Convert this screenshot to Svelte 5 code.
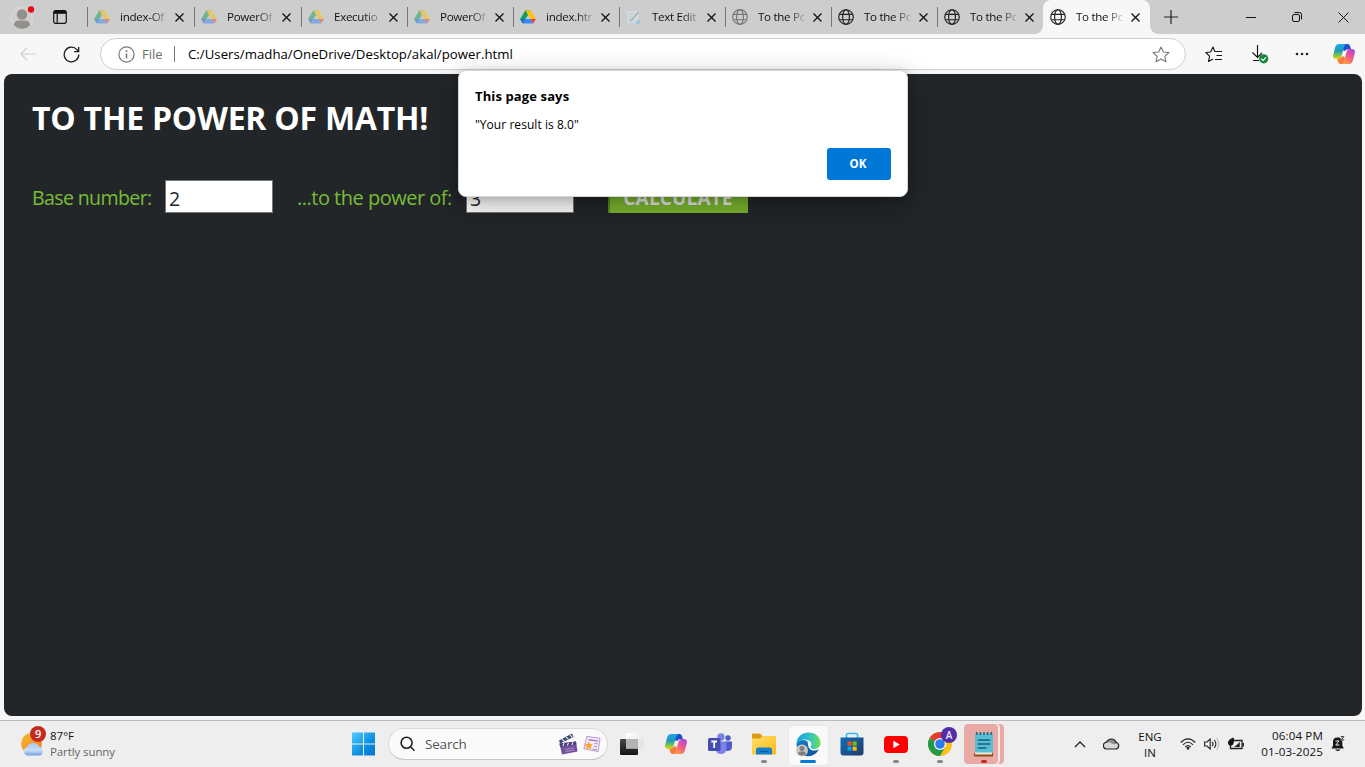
<script>
  const tabs = [
    { title: 'index-Of', icon: 'drive', faded: true, w: 107 },
    { title: 'PowerOf', icon: 'drive', faded: true, w: 107 },
    { title: 'Executio', icon: 'drive', faded: true, w: 106 },
    { title: 'PowerOf', icon: 'drive', faded: true, w: 106 },
    { title: 'index.htr', icon: 'drive', faded: false, w: 106 },
    { title: 'Text Edit', icon: 'edit', faded: true, w: 106 },
    { title: 'To the Po', icon: 'globe', faded: true, w: 106 },
    { title: 'To the Po', icon: 'globe', faded: false, w: 106 },
    { title: 'To the Po', icon: 'globe', faded: false, w: 106 },
    { title: 'To the Po', icon: 'globe', faded: false, w: 107, active: true }
  ];
  let base = $state('2');
  let exponent = $state('3');
</script>

{#snippet drive()}
  <svg width="16" height="16" viewBox="0 0 16 16">
    <path d="M5.3 1.2H10.7L8 5.9Z" fill="#188038" />
    <path d="M5.3 1.2H10.7L15.8 10H10.5Z" fill="#ffc107" />
    <path d="M5.3 1.2 8 5.9 5.5 10 2.7 14.4.2 10Z" fill="#11a15b" />
    <path d="M.2 10H5.5L2.7 14.6Z" fill="#1967d2" />
    <path d="M10.5 10H15.8L13.3 14.6Z" fill="#ea4335" />
    <path d="M5.5 10H10.5L13.3 14.6H2.7Z" fill="#4285f4" />
  </svg>
{/snippet}

{#snippet globe()}
  <svg width="16" height="16" viewBox="0 0 16 16" fill="none" stroke="#222" stroke-width="1.15">
    <circle cx="8" cy="8" r="7.3" /><ellipse cx="8" cy="8" rx="3.4" ry="7.3" /><path d="M1.4 5.3H14.6M1.4 10.7H14.6" />
  </svg>
{/snippet}

{#snippet editor()}
  <svg width="14" height="16" viewBox="0 0 14 16">
    <path d="M.5 1.5H13.5V15H.5Z" fill="#dbe8ec" stroke="#c3ccd0" />
    <path d="M3 5H8M3 8H7M3 11H10" stroke="#a4c9d6" /><path d="M9 14.5 13.5 10V14.5Z" fill="#5eb8ee" />
    <path d="M3 13 12.5 2.2 13 3.5 5 12Z" fill="#5f7177" />
  </svg>
{/snippet}

{#snippet cross()}
  <svg width="9" height="9" viewBox="0 0 9 9"><path d="M.5.5 8.5 8.5M8.5.5.5 8.5" stroke="#111" stroke-width="1.25" /></svg>
{/snippet}

{#snippet copilot()}
  <svg width="22" height="22" viewBox="0 0 22 22">
    <defs>
      <linearGradient id="cpa" x2="0" y2="1"><stop stop-color="#20a5ee" /><stop offset=".45" stop-color="#2199bb" /><stop offset=".75" stop-color="#75c84b" /><stop offset="1" stop-color="#f2cd13" /></linearGradient>
      <linearGradient id="cpb" x1="1" x2=".3" y2="1"><stop stop-color="#a044ee" /><stop offset=".5" stop-color="#ef568d" /><stop offset="1" stop-color="#ff9f3a" /></linearGradient>
    </defs>
    <path d="M11 1H14.5Q16.3 1 17 3L18 6.3H14L12 8 9 7Z" fill="#1f4fcf" />
    <path d="M4 14.5H8L10 13 13 16 10.5 21H8Q5.7 21 5 18.5Z" fill="#f77a42" />
    <path d="M6 1H14Q12 1 11.3 3.3L8.5 13Q7.6 16 5 16H3Q-.7 16 .3 11.5L2 5Q3 1 6 1Z" fill="url(#cpa)" />
    <path d="M16 6H19Q22.7 6 21.7 10.5L20 17Q19 21 16 21H8Q10 21 10.7 18.7L13.5 9Q14.4 6 16 6Z" fill="url(#cpb)" />
  </svg>
{/snippet}

<div class="screen">
  <header class="tabstrip">
    <div class="profile">
      <svg width="26" height="26" viewBox="0 0 26 26">
        <circle cx="11" cy="14" r="10.6" fill="#d1cfcc" stroke="#dfdbd2" stroke-width=".8" />
        <circle cx="11" cy="10.5" r="5.2" fill="#92908d" /><path d="M3 21.5Q3 16.5 8 16.5H14Q19 16.5 19 21.5Q15 25 11 25Q7 25 3 21.5Z" fill="#92908d" />
        <circle cx="20" cy="5.5" r="3.2" fill="#e80d12" />
      </svg>
    </div>
    <div class="workspaces">
      <svg width="14" height="14" viewBox="0 0 14 14" fill="none" stroke="#111" stroke-width="1.2"><rect x=".7" y=".7" width="12.6" height="12.6" rx="2" /><path d="M1 3.2H13M4.2 4V13" /><path d="M1 2H13" stroke-width="2.4" /></svg>
    </div>
    <nav class="tabs">
      {#each tabs as tab}
        <div class="tab" class:active={tab.active} style:width="{tab.w}px">
          <span class="favicon" class:faded={tab.faded}>
            {#if tab.icon === 'drive'}{@render drive()}{:else if tab.icon === 'edit'}{@render editor()}{:else}{@render globe()}{/if}
          </span>
          <span class="title">{tab.title}</span>
          <span class="close">{@render cross()}</span>
        </div>
      {/each}
    </nav>
    <div class="newtab"><svg width="14" height="14" viewBox="0 0 14 14"><path d="M7 0V14M0 7H14" stroke="#222" stroke-width="1.2" /></svg></div>
    <div class="wincontrols">
      <span><svg width="10" height="10" viewBox="0 0 10 10"><path d="M0 5.5H10" stroke="#111" /></svg></span>
      <span><svg width="10" height="10" viewBox="0 0 10 10" fill="none" stroke="#111"><rect x=".5" y="2.5" width="7" height="7" rx="1.5" /><path d="M2.5.5H7.5Q9.5.5 9.5 2.5V7.5" /></svg></span>
      <span><svg width="11" height="11" viewBox="0 0 11 11"><path d="M.5.5 10.5 10.5M10.5.5.5 10.5" stroke="#111" /></svg></span>
    </div>
  </header>

  <div class="toolbar">
    <div class="back"><svg width="16" height="14" viewBox="0 0 16 14" fill="none" stroke="#cfcfcf" stroke-width="1.1"><path d="M16 7H1M7.3.5.8 7 7.3 13.5" /></svg></div>
    <div class="reload"><svg width="17" height="17" viewBox="0 0 17 17" fill="none" stroke="#191919" stroke-width="1.25"><path d="M15.8 8.5A7.3 7.3 0 1 1 13.9 3.6L15.5 5.3M15.7 1V5.5H11.2" /></svg></div>
    <div class="address">
      <svg class="info" width="17" height="17" viewBox="0 0 17 17" fill="none" stroke="#777" stroke-width="1.2"><circle cx="8.5" cy="8.5" r="7.6" /><path d="M8.5 7.4V12.5" stroke-width="1.5" /><circle cx="8.5" cy="5" r=".4" /></svg>
      <span class="scheme">File</span><span class="sep"></span><span class="url">C:/Users/madha/OneDrive/Desktop/akal/power.html</span>
      <svg class="fav" width="18" height="17" viewBox="0 0 18 17" fill="none" stroke="#777" stroke-width="1.1" stroke-linejoin="round"><path d="M9 1 11.3 6 17 6.5 12.8 10.3 14 15.8 9 13 4 15.8 5.2 10.3 1 6.5 6.7 6Z" /></svg>
    </div>
    <div class="actions">
      <span><svg width="18" height="17" viewBox="0 0 18 17" fill="none" stroke="#171717" stroke-width="1.15" stroke-linejoin="round"><path d="M9.8 5.5 8 1 5.6 6 .8 6.5 4.6 10.2 3.5 15.5 8 12.9M9.8 5.5H17M11.5 9.5H17M10 13.5H17" /></svg></span>
      <span class="dl"><svg width="20" height="20" viewBox="0 0 20 20" fill="none" stroke="#171717" stroke-width="1.2"><path d="M8.5 1V13M3.5 8.5 8.5 13.5 13 9M4 16.5H10" /><circle cx="14.7" cy="14.8" r="4.6" fill="#17883b" stroke="none" /><path d="M12.3 14.8 14.1 16.4 17 13.3" stroke="#fff" /></svg></span>
      <span><svg width="14" height="4" viewBox="0 0 14 4" fill="#222"><circle cx="2" cy="2" r="1.3" /><circle cx="7" cy="2" r="1.3" /><circle cx="12" cy="2" r="1.3" /></svg></span>
      <span class="cp">{@render copilot()}</span>
    </div>
  </div>

  <main class="viewport">
    <h1>TO THE POWER OF MATH!</h1>
    <form class="calc">
      <label class="base" for="base">Base number:</label>
      <input id="base" bind:value={base} />
      <label class="exp" for="exp">...to the power of:</label>
      <input id="exp" bind:value={exponent} />
      <button type="button">CALCULATE</button>
    </form>
  </main>

  <div class="dialog" role="alertdialog">
    <strong>This page says</strong>
    <p>"Your result is 8.0"</p>
    <button>OK</button>
  </div>

  <footer class="taskbar">
    <div class="weather">
      <svg width="28" height="32" viewBox="0 0 28 32">
        <defs><linearGradient id="sun" x2="1" y2="1"><stop stop-color="#f2bd35" /><stop offset="1" stop-color="#f47921" /></linearGradient><linearGradient id="cl" x2="0" y2="1"><stop stop-color="#a8c8f4" /><stop offset=".6" stop-color="#c8ddfa" /><stop offset="1" stop-color="#719bdd" /></linearGradient></defs>
        <circle cx="11.5" cy="17.5" r="10.5" fill="url(#sun)" /><path d="M7 29.5A4.5 4.5 0 0 1 7 21Q9 16.5 14 17Q18 17.5 19.5 21A4.5 4.5 0 0 1 20 29.5Z" fill="url(#cl)" />
        <circle cx="18" cy="8" r="8" fill="#c42b1c" /><text x="18.2" y="12" font-size="11" font-weight="600" text-anchor="middle" fill="#fff">9</text>
      </svg>
      <div><b>87°F</b><span>Partly sunny</span></div>
    </div>
    <div class="start"><svg width="24" height="24" viewBox="0 0 24 24"><defs><linearGradient id="win" x2="1" y2="1"><stop stop-color="#50cdff" /><stop offset=".6" stop-color="#0c8ee0" /><stop offset="1" stop-color="#0375d1" /></linearGradient></defs><path d="M0 .5H11V11.5H0ZM12 .5H23V11.5H12ZM0 12.5H11V23.5H0ZM12 12.5H23V23.5H12Z" fill="url(#win)" /></svg></div>
    <div class="search">
      <svg width="16" height="16" viewBox="0 0 16 16" fill="none" stroke="#222" stroke-width="1.6"><circle cx="6.6" cy="6.8" r="5.5" /><path d="M10.6 10.8 14 14.3" stroke-linecap="round" /></svg>
      <span>Search</span>
      <svg class="clap" width="20" height="22" viewBox="0 0 20 22"><path d="M1.5 10.5 18 8.5 19.5 18.5 4 21.5Z" fill="#72509d" /><path d="M1 7.5 14 .5 15.5 4 2.2 10.5Z" fill="#39476f" /><path d="M1.5 10.5 18 8.5 18.4 11.5 2 13.8Z" fill="#4a3b78" /><path d="M4 6 6.5 8.5M8 4 10.5 6.4M12 1.8 14.3 4.4M6 10.3 5 13M10.5 9.8 9.3 12.6M15 9.2 13.8 12" stroke="#e7deef" stroke-width="1.2" /><path d="M7 16.5 16 15M7.5 18.5 16.5 17" stroke="#b79ad5" stroke-width=".8" /></svg>
      <svg class="news" width="18" height="18" viewBox="0 0 19 18"><path d="M4 1 18 3 16 17 1 14Z" fill="#f3eafb" stroke="#b594cb" /><path d="M6 4.5 16 6" stroke="#a275ba" stroke-width="1.5" /><path d="M12 8.5 16 9M11.5 11.5 15 12M10 14.5 15 15" stroke="#a98abb" /><path d="M6 6 7.4 8.9 10.5 9.2 8.2 11.5 9 14.5 6 13.2 3.3 14.5 3.8 11.5 1.5 9.5 4.8 9Z" fill="#f6a623" /></svg>
    </div>
    <nav class="apps">
      <span class="app taskview"><svg width="24" height="22" viewBox="0 0 24 22"><defs><linearGradient id="tv" x2="0" y2="1"><stop stop-color="#474745" /><stop offset="1" stop-color="#141513" /></linearGradient><linearGradient id="tw" x2="1" y2="1"><stop stop-color="#fff" /><stop offset="1" stop-color="#dedede" /></linearGradient></defs><rect y="6" width="18" height="16" rx="1" fill="url(#tv)" /><rect x="6" width="17.5" height="15.5" rx="1" fill="url(#tw)" /><path d="M6 6H18V15.5H6Z" fill="#b3b3b2" /></svg></span>
      <span class="app">{@render copilot()}</span>
      <span class="app"><svg width="24" height="24" viewBox="0 0 24 24"><circle cx="13" cy="5" r="3.7" fill="#7a82e5" /><circle cx="20" cy="6" r="2.7" fill="#5059c9" /><path d="M17 9.5H24V15Q24 19 19 19H17Z" fill="#5059c9" /><path d="M8 9.5H18.5V17Q18 22 13 22Q8 22 8 17Z" fill="#7b83eb" /><rect y="6" width="12.5" height="13" rx="1.5" fill="#454dae" /><path d="M3.3 9.5H9M6.2 9.5V16" stroke="#fff" stroke-width="1.8" /></svg></span>
      <span class="app running"><svg width="24" height="22" viewBox="0 0 24 22"><defs><linearGradient id="fld" x2="1" y2="1"><stop stop-color="#ffe06a" /><stop offset="1" stop-color="#fcb914" /></linearGradient></defs><path d="M0 1.5Q0 .5 1 .5H8L10.5 3H23Q24 3 24 4V7H0Z" fill="#dc9b10" /><path d="M0 5.5H8L10.5 3H23Q24 3 24 4V20Q24 21.5 22.5 21.5H1.5Q0 21.5 0 20Z" fill="url(#fld)" /><path d="M4 21.5V17Q4 14.5 6.5 14.5H17.5Q20 14.5 20 17V21.5Z" fill="#1680cf" /><path d="M8 18.5H16" stroke="#075da5" stroke-width="1.2" /></svg></span>
      <span class="app selected"><svg width="25" height="25" viewBox="0 0 25 25"><defs><linearGradient id="ed" x2="1"><stop stop-color="#159fe3" /><stop offset=".6" stop-color="#38c5bd" /><stop offset="1" stop-color="#6fe04e" /></linearGradient><linearGradient id="eb" x2="1" y2="1"><stop stop-color="#1683cc" /><stop offset="1" stop-color="#084b97" /></linearGradient></defs><path d="M.5 12Q2 8 7 8Q12 8 12 12C12 19 19 20 23 17Q19.5 24.3 12 24.3C4 24.3.5 18 .5 12Z" fill="url(#eb)" /><path d="M.5 12C1 4.5 6 .5 12.5.5C20 .5 24.5 5.5 24.5 11C24.5 15 21 17 18 17C15 17 13.5 15.5 15 13.8C17 10 12 7 7.5 7.5Q3 8 .5 12Z" fill="url(#ed)" /><circle cx="6" cy="18.5" r="6" fill="#c9c7c4" /><circle cx="6" cy="16.5" r="2.5" fill="#82807d" /><path d="M2 22Q2 19.5 5 19.5H7Q10 19.5 10 22Q6 25 2 22Z" fill="#82807d" /></svg></span>
      <span class="app"><svg width="24" height="24" viewBox="0 0 24 24"><defs><linearGradient id="st" x2="1" y2="1"><stop stop-color="#146db8" /><stop offset="1" stop-color="#23396a" /></linearGradient></defs><path d="M6.5 6V3Q6.5 1.5 8 1.5H16Q17.5 1.5 17.5 3V6" fill="none" stroke="#38bceb" stroke-width="1.7" /><path d="M.5 5.5H23.5V20.5Q23.5 23.5 20.5 23.5H3.5Q.5 23.5.5 20.5Z" fill="url(#st)" /><path d="M7.5 9.5H11.6V13.6H7.5Z" fill="#f25022" /><path d="M12.6 9.5H16.7V13.6H12.6Z" fill="#7fba00" /><path d="M7.5 14.6H11.6V18.7H7.5Z" fill="#00a4ef" /><path d="M12.6 14.6H16.7V18.7H12.6Z" fill="#ffb900" /></svg></span>
      <span class="app running"><svg width="24" height="17" viewBox="0 0 24 17"><rect width="24" height="17" rx="4" fill="#f00" /><path d="M9.3 4.8V12.2L15.8 8.5Z" fill="#fff" /></svg></span>
      <span class="app running chrome"><svg width="30" height="30" viewBox="0 0 30 30"><circle cx="12" cy="17" r="12" fill="#fbc116" /><path d="M12 17 1.6 11A12 12 0 0 1 22.4 11Z" fill="#e33b2e" /><path d="M12 17 1.6 11A12 12 0 0 0 12 29L17.2 20Z" fill="#249a48" /><circle cx="12" cy="17" r="6" fill="#fff" /><circle cx="12" cy="17" r="4.8" fill="#2c7cf0" /><circle cx="21" cy="8" r="8" fill="#512da8" /><text x="21" y="11.6" text-anchor="middle" font-size="10" font-weight="600" fill="#ece4ff">A</text></svg></span>
      <span class="app running notepad"><svg width="20" height="25" viewBox="0 0 20 25"><path d="M1 1.5H19V22H1Z" fill="#58bcd6" /><path d="M0 21H19V24.5H1Q0 24.5 0 23Z" fill="#8f4c14" /><path d="M1 20.5H18V22.5H1Z" fill="#f4ead4" /><path d="M2.8 0V3M6.4 0V3M10 0V3M13.6 0V3M17.2 0V3" stroke="#245e6e" stroke-width="1.4" /><path d="M4.5 8H15.5M4.5 12H15.5M4.5 16H12" stroke="#145e76" stroke-width="1.6" stroke-linecap="round" /></svg></span>
    </nav>
    <div class="tray">
      <svg class="chev" width="12" height="7" viewBox="0 0 12 7" fill="none" stroke="#222" stroke-width="1.3"><path d="M1 6 6 1 11 6" /></svg>
      <svg class="cloud" width="17" height="12" viewBox="0 0 17 12"><path d="M4 11A3.4 3.4 0 0 1 3.5 4.2Q5 1 8.3 1Q12 1 13 4.5A3.3 3.3 0 0 1 13 11Z" fill="#d7d7d7" /><path d="M2 6Q4 3.5 7 4.6L11 6.5 14.5 5Q13 1 8.3 1Q5 1 3.5 4.2Z" fill="#8c8c8c" /><path d="M4 11A3.4 3.4 0 0 1 3.5 4.2Q5 1 8.3 1Q12 1 13 4.5A3.3 3.3 0 0 1 13 11Z" fill="none" stroke="#222" stroke-width="1.2" /></svg>
      <div class="lang"><span>ENG</span><span>IN</span></div>
      <svg class="wifi" width="16" height="12" viewBox="0 0 16 12" fill="none" stroke="#222" stroke-width="1.1"><path d="M.7 4.5Q8-2.7 15.3 4.5M3 6.8Q8 1.8 13 6.8M5.2 9Q8 6.2 10.8 9" /><circle cx="8" cy="10.2" r=".9" fill="#222" /></svg>
      <svg class="sound" width="16" height="14" viewBox="0 0 16 14" fill="none" stroke="#222" stroke-width="1.1"><path d="M.6 5H3L6.2 2V12L3 9H.6ZM8.2 4.8Q10 7 8.2 9.2M10.4 3Q13.4 7 10.4 11" /><path d="M12.5 1.2Q17 7 12.5 12.8" stroke="#bbb" /></svg>
      <svg class="battery" width="17" height="14" viewBox="0 0 17 14"><path d="M6 3.5H14V11.5H2.5V8" fill="none" stroke="#222" stroke-width="1.3" /><path d="M14.5 6H16V9.5H14.5Z" fill="#222" /><path d="M0 5Q1 2 5.5.5Q6.8 4.5 5 7.5Q3.5 9.5 1 8.3Q-.2 7 0 5Z" fill="#161616" /><path d="M7.5 9 11.8 5V10H6Z" fill="#222" /></svg>
      <div class="clock"><span class="time">06:04 PM</span><span class="date">01-03-2025</span></div>
      <svg class="bell" width="14" height="16" viewBox="0 0 14 16"><path d="M2 6Q2 1.5 6 1.5H8Q11.3 2 11.3 6V9.5L12.8 12.5H.5L2 9.5Z" fill="#161616" /><path d="M4 13.5H9.5Q7 16.5 4 13.5Z" fill="#161616" /><path d="M4.5 5H8L4.8 9H8.4" fill="none" stroke="#eee" /><path d="M9 0H14V5H10Z" fill="#eee" /><path d="M9.8.7H12.8L10 4H13.2" fill="none" stroke="#222" /></svg>
    </div>
  </footer>
</div>

<style>
  :global(body) { margin: 0; overflow: hidden; }
  * { box-sizing: border-box; }
  svg { display: block; flex: none; }
  .screen { position: relative; width: 1365px; height: 767px; display: flex; flex-direction: column; background: #f7f7f7; font-family: "Open Sans", "Noto Sans", sans-serif; font-size: 12px; color: #111; white-space: nowrap; overflow: hidden; }
  .tabstrip { height: 34px; flex: none; background: #cdcdcd; display: flex; align-items: center; }
  .profile { width: 38px; padding-left: 11px; }
  .workspaces { width: 49px; padding-left: 15px; }
  .tabs { display: flex; height: 34px; }
  .tab { position: relative; display: flex; align-items: center; flex: none; padding-left: 7px; }
  .tab:not(.active)::before { content: ""; position: absolute; left: 0; top: 7px; width: 1px; height: 20px; background: #777; }
  .favicon { width: 16px; margin-right: 10px; }
  .favicon.faded { opacity: .5; }
  .title { width: 47px; line-height: 18px; font-size: 11.6px; letter-spacing: -.3px; mask-image: linear-gradient(90deg, #000 64%, rgba(0, 0, 0, .2) 97%, transparent); }
  .close { margin-left: 8px; }
  .active { background: #f7f7f7; border-radius: 8px 8px 0 0; }
  .active::before, .active::after { content: ""; position: absolute; bottom: 0; width: 8px; height: 8px; }
  .active::before { left: -8px; background: radial-gradient(circle at 0 0, transparent 7.5px, #f7f7f7 8px); }
  .active::after { right: -8px; background: radial-gradient(circle at 100% 0, transparent 7.5px, #f7f7f7 8px); }
  .newtab { margin-left: 14px; }
  .wincontrols { margin: 0 -1px 0 auto; display: flex; }
  .wincontrols span { width: 46px; display: grid; place-items: center; }
  .toolbar { height: 40px; flex: none; display: flex; align-items: center; }
  .back { flex: none; width: 63px; padding-left: 20px; }
  .reload { flex: none; width: 37px; }
  .address { flex: none; width: 1086px; height: 32px; border: 1px solid #d0d0d0; border-radius: 16px; background: #fff; display: flex; align-items: center; padding: 0 15px 0 17px; font-size: 13px; }
  .scheme { color: #6c6c6c; margin-left: 7px; width: 32px; }
  .sep { width: 1px; height: 16px; background: #777; }
  .url { margin-left: 13px; color: #000; font-size: 13.2px; letter-spacing: .03px; }
  .fav { margin-left: auto; }
  .actions { display: flex; flex: none; align-items: center; margin-left: 6px; }
  .actions span { width: 44px; display: grid; place-items: center; }
  .actions .dl { padding-left: 2px; }
  .actions .cp { width: 40px; }
  .viewport { flex: none; margin-left: 4px; width: 1358px; height: 642px; background: #222629; border-radius: 8px; padding: 19px 28px 0; }
  h1 { margin: 0; height: 50px; line-height: 50px; font-size: 32px; font-weight: 700; color: #fff; letter-spacing: -.24px; }
  .calc { display: flex; margin-top: 37px; align-items: center; height: 33px; font-size: 20px; color: #79bd35; }
  .calc label { line-height: 33px; padding-top: 2px; letter-spacing: -.5px; }
  .calc .base { width: 133px; font-size: 19.6px; letter-spacing: -.65px; }
  .exp { width: 169px; margin-left: 24px; }
  .calc input { width: 108px; height: 33px; border: 1px solid #777; border-radius: 0; background: #fff; padding: 3px 4px 0 3px; font: 19.5px "Open Sans", sans-serif; color: #222629; outline: 0; }
  .calc button { margin-left: 34px; width: 140px; height: 33px; padding: 1px 2px 0 0; background: #7bb62f; border: 0 solid #57851f; border-left-width: 2px; border-top-width: 2px; font: 700 19px "Open Sans", sans-serif; color: #e8e8e8; letter-spacing: .15px; }
  .dialog { position: absolute; left: 458px; top: 70px; width: 450px; height: 127px; border: 1px solid #d6d6d6; border-radius: 8px; background: #fff; box-shadow: 0 10px 32px rgba(0, 0, 0, .28), 0 2px 8px rgba(0, 0, 0, .16); display: flex; flex-direction: column; padding: 15px 16px; color: #000; }
  .dialog strong { font-size: 13px; line-height: 20px; letter-spacing: .12px; }
  .dialog p { margin: 9px 0 13px; font-size: 12px; line-height: 20px; letter-spacing: .05px; }
  .dialog button { align-self: flex-end; width: 64px; height: 32px; border: 0; border-radius: 3px; background: #0078d7; color: #fff; font: 700 11.5px "Open Sans", sans-serif; padding: 0 2px 2px 0; }
  .taskbar { flex: none; height: 47px; margin-top: 4px; border-top: 1px solid #b9bcb9; background: #eee; display: flex; align-items: center; }
  .weather { flex: none; width: 352px; display: flex; padding-left: 20px; align-items: center; }
  .weather svg { margin-top: -4px; }
  .weather div { margin-left: 2px; display: grid; line-height: 16px; font-size: 11.5px; }
  .weather b { font-weight: 400; }
  .weather span { color: #666; letter-spacing: -.1px; }
  .start { flex: none; width: 36px; }
  .search { flex: none; width: 220px; height: 32px; border: 1px solid #d9d9d9; border-bottom-color: #c6c6c6; border-radius: 16px; background: #fafafa; display: flex; align-items: center; padding: 0 6px 0 11px; font-size: 13.5px; color: #555; }
  .search span { margin-left: 9px; letter-spacing: -.2px; }
  .clap { margin-left: auto; }
  .news { margin-left: 5px; }
  .apps { display: flex; margin-left: 2px; }
  .app { position: relative; flex: none; width: 44px; height: 46px; display: grid; place-items: center; }
  .app svg { position: relative; }
  .running::after, .selected::after { content: ""; position: absolute; bottom: 4px; left: 19px; width: 6px; height: 3px; border-radius: 2px; background: #888; }
  .selected::before { content: ""; position: absolute; left: 2px; top: 4px; width: 39px; height: 39px; border: 1px solid #e7e7e7; border-radius: 4px; background: #fafafa; }
  .selected::after { width: 16px; left: 14px; background: #0078d4; }
  .chrome svg { margin: -4px 0 0 5px; }
  .notepad::before { content: ""; position: absolute; left: 2px; top: 3px; width: 34px; height: 40px; border-radius: 4px; background: #e9aaa6; box-shadow: 2px 0 #f8eae9, 6px 0 #e9aaa6; }
  .notepad::after { background: #c42b1c; }
  .tray { display: flex; align-items: center; margin-left: 68px; font-size: 12px; }
  .cloud { margin-left: 17px; }
  .lang { width: 40px; margin-left: 10px; display: grid; text-align: center; line-height: 16px; font-size: 11.5px; padding-top: 1px; }
  .wifi { margin-left: 10px; }
  .sound { margin-left: 8px; }
  .battery { margin-left: 8px; }
  .clock { width: 70px; margin-left: 8px; display: grid; text-align: right; line-height: 16px; font-size: 11.6px; letter-spacing: .12px; }
  .bell { margin-left: 8px; }
</style>
